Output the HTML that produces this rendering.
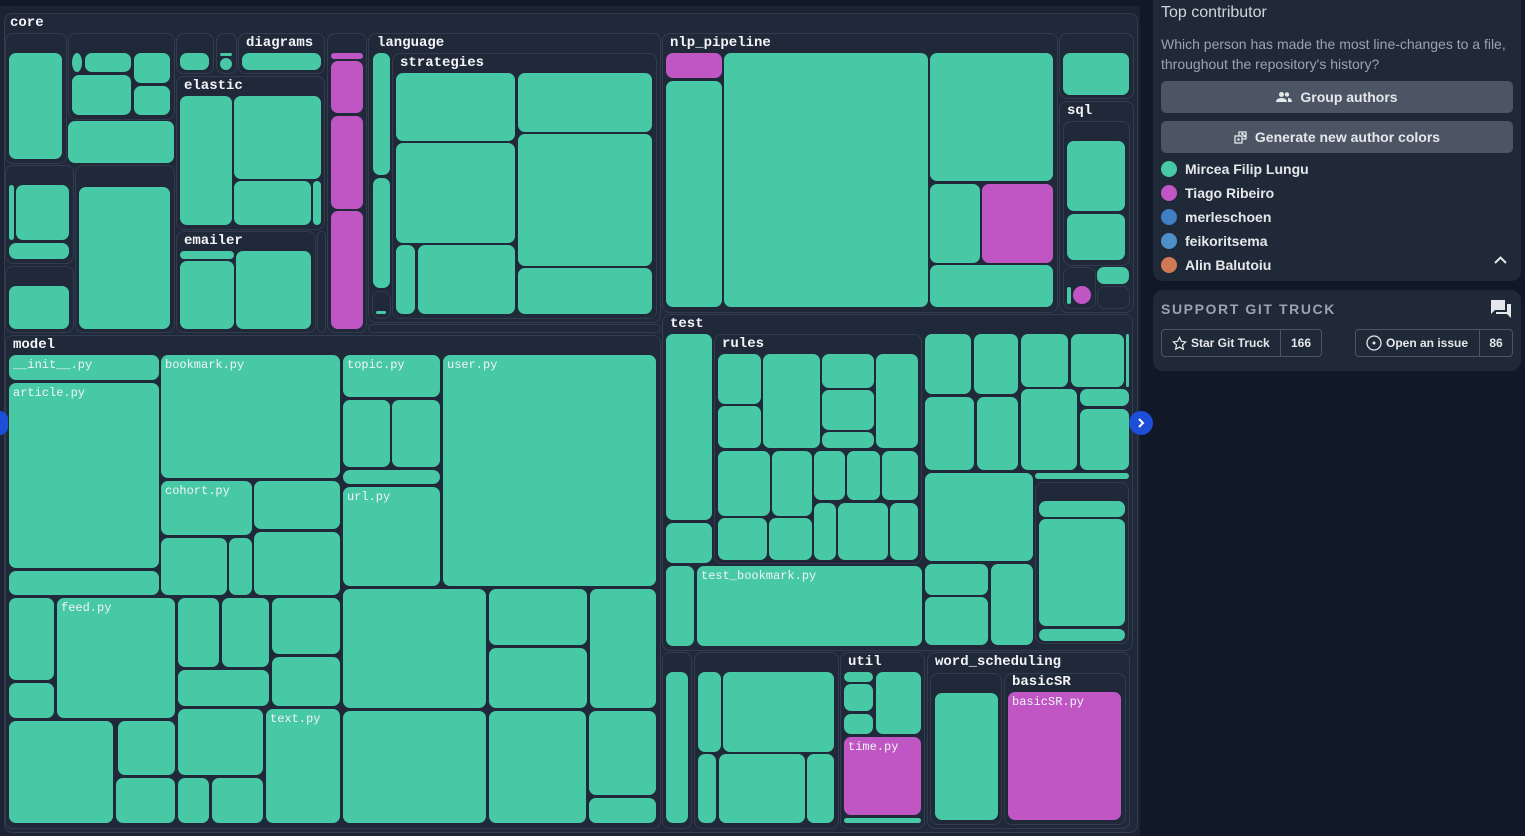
<!DOCTYPE html>
<html><head><meta charset="utf-8"><style>
*{margin:0;padding:0;box-sizing:border-box}
body{width:1525px;height:836px;background:#111827;position:relative;overflow:hidden;font-family:"Liberation Sans",sans-serif}
.a{position:absolute}
.f{position:absolute;border:1px solid #323c4e;border-radius:8px;background:#202939}
.t,.m{position:absolute;border-radius:7px;background:#48c9a5}
.m{background:#c056c4}
.l{position:absolute;font-family:"Liberation Mono",monospace;font-weight:bold;font-size:14px;color:#f3f4f6;line-height:14px}
.n{position:absolute;font-family:"Liberation Mono",monospace;font-size:12px;color:#f3f4f6;line-height:12px;left:4px;top:4px;white-space:nowrap}
.p{position:absolute;background:#1f2937;border-radius:10px}
.btn{position:absolute;background:#4b5563;border-radius:5px;color:#e5e7eb;font-weight:bold;font-size:14px;display:flex;align-items:center;justify-content:center;gap:8px}
.lg{position:absolute;left:1161px;font-weight:bold;font-size:14px;color:#e5e7eb;display:flex;align-items:center;gap:8px;height:18px}
.lg span{width:16px;height:16px;border-radius:50%;display:inline-block}
.sb{position:absolute;border:1px solid #4b5563;border-radius:4px;background:#1f2937;color:#e5e7eb;font-size:12px;font-weight:bold;display:flex;align-items:center;height:28px}
</style></head><body>
<div class="a" style="left:0;top:6px;width:1140px;height:830px;background:#1c2433"></div>
<div class="f" style="left:4px;top:13px;width:1134px;height:820px"></div>
<div class="l" style="left:10px;top:16px">core</div>

<div class="f" style="left:5px;top:33px;width:62px;height:131px"></div>
<div class="t" style="left:9px;top:53px;width:53px;height:106px"></div>
<div class="f" style="left:68px;top:33px;width:107px;height:87px"></div>
<div class="t" style="left:72px;top:53px;width:10px;height:19px;border-radius:50%"></div>
<div class="t" style="left:85px;top:53px;width:46px;height:19px"></div>
<div class="t" style="left:134px;top:53px;width:36px;height:30px"></div>
<div class="t" style="left:72px;top:75px;width:59px;height:40px"></div>
<div class="t" style="left:134px;top:86px;width:36px;height:29px"></div>
<div class="t" style="left:68px;top:121px;width:106px;height:42px"></div>
<div class="f" style="left:5px;top:165px;width:69px;height:99px"></div>
<div class="t" style="left:9px;top:185px;width:5px;height:55px;border-radius:3px"></div>
<div class="t" style="left:16px;top:185px;width:53px;height:55px"></div>
<div class="t" style="left:9px;top:243px;width:60px;height:16px"></div>
<div class="f" style="left:75px;top:165px;width:100px;height:168px"></div>
<div class="t" style="left:79px;top:187px;width:91px;height:142px"></div>
<div class="f" style="left:5px;top:266px;width:69px;height:67px"></div>
<div class="t" style="left:9px;top:286px;width:60px;height:43px"></div>
<div class="f" style="left:176px;top:33px;width:38px;height:41px"></div>
<div class="t" style="left:180px;top:53px;width:29px;height:17px"></div>
<div class="f" style="left:216px;top:33px;width:21px;height:41px"></div>
<div class="t" style="left:220px;top:53px;width:12px;height:3px"></div>
<div class="t" style="left:220px;top:58px;width:12px;height:12px;border-radius:50%"></div>
<div class="f" style="left:238px;top:33px;width:87px;height:41px"></div>
<div class="l" style="left:246px;top:36px">diagrams</div>
<div class="t" style="left:242px;top:53px;width:79px;height:17px"></div>
<div class="f" style="left:176px;top:76px;width:149px;height:154px"></div>
<div class="l" style="left:184px;top:79px">elastic</div>
<div class="t" style="left:180px;top:96px;width:52px;height:129px"></div>
<div class="t" style="left:234px;top:96px;width:87px;height:83px"></div>
<div class="t" style="left:234px;top:181px;width:77px;height:44px"></div>
<div class="t" style="left:313px;top:181px;width:8px;height:44px;border-radius:4px"></div>
<div class="f" style="left:176px;top:231px;width:140px;height:102px"></div>
<div class="l" style="left:184px;top:234px">emailer</div>
<div class="t" style="left:180px;top:251px;width:54px;height:8px;border-radius:4px"></div>
<div class="t" style="left:180px;top:261px;width:54px;height:68px"></div>
<div class="t" style="left:236px;top:251px;width:75px;height:78px"></div>
<div class="f" style="left:317px;top:231px;width:9px;height:102px"></div>
<div class="f" style="left:327px;top:33px;width:40px;height:300px"></div>
<div class="m" style="left:331px;top:53px;width:32px;height:6px;border-radius:3px"></div>
<div class="m" style="left:331px;top:61px;width:32px;height:52px"></div>
<div class="m" style="left:331px;top:116px;width:32px;height:93px"></div>
<div class="m" style="left:331px;top:211px;width:32px;height:118px"></div>

<div class="f" style="left:368px;top:33px;width:293px;height:290px"></div>
<div class="l" style="left:377px;top:36px">language</div>
<div class="t" style="left:373px;top:53px;width:17px;height:122px"></div>
<div class="t" style="left:373px;top:178px;width:17px;height:110px"></div>
<div class="f" style="left:372px;top:291px;width:19px;height:28px"></div>
<div class="t" style="left:376px;top:311px;width:10px;height:3px"></div>
<div class="f" style="left:392px;top:53px;width:265px;height:266px"></div>
<div class="l" style="left:400px;top:56px">strategies</div>
<div class="t" style="left:396px;top:73px;width:119px;height:68px"></div>
<div class="t" style="left:518px;top:73px;width:134px;height:59px"></div>
<div class="t" style="left:396px;top:143px;width:119px;height:100px"></div>
<div class="t" style="left:518px;top:134px;width:134px;height:132px"></div>
<div class="t" style="left:396px;top:245px;width:19px;height:69px"></div>
<div class="t" style="left:418px;top:245px;width:97px;height:69px"></div>
<div class="t" style="left:518px;top:268px;width:134px;height:46px"></div>
<div class="f" style="left:368px;top:324px;width:293px;height:9px"></div>

<div class="f" style="left:662px;top:33px;width:396px;height:280px"></div>
<div class="l" style="left:670px;top:36px">nlp_pipeline</div>
<div class="m" style="left:666px;top:53px;width:56px;height:25px"></div>
<div class="t" style="left:666px;top:81px;width:56px;height:226px"></div>
<div class="t" style="left:724px;top:53px;width:204px;height:254px"></div>
<div class="t" style="left:930px;top:53px;width:123px;height:128px"></div>
<div class="t" style="left:930px;top:184px;width:50px;height:79px"></div>
<div class="m" style="left:982px;top:184px;width:71px;height:79px"></div>
<div class="t" style="left:930px;top:265px;width:123px;height:42px"></div>
<div class="f" style="left:1059px;top:33px;width:75px;height:66px"></div>
<div class="t" style="left:1063px;top:53px;width:66px;height:42px"></div>
<div class="f" style="left:1059px;top:101px;width:75px;height:212px"></div>
<div class="l" style="left:1067px;top:104px">sql</div>
<div class="f" style="left:1063px;top:121px;width:67px;height:145px"></div>
<div class="t" style="left:1067px;top:141px;width:58px;height:70px"></div>
<div class="t" style="left:1067px;top:214px;width:58px;height:46px"></div>
<div class="f" style="left:1063px;top:267px;width:33px;height:42px"></div>
<div class="t" style="left:1067px;top:287px;width:4px;height:17px;border-radius:2px"></div>
<div class="m" style="left:1073px;top:286px;width:18px;height:18px;border-radius:50%"></div>
<div class="t" style="left:1097px;top:267px;width:32px;height:17px"></div>
<div class="f" style="left:1097px;top:286px;width:33px;height:23px"></div>

<div class="f" style="left:5px;top:335px;width:656px;height:494px"></div>
<div class="l" style="left:13px;top:338px">model</div>
<div class="t" style="left:9px;top:355px;width:150px;height:25px"><span class="n">__init__.py</span></div>
<div class="t" style="left:9px;top:383px;width:150px;height:185px"><span class="n">article.py</span></div>
<div class="t" style="left:9px;top:571px;width:150px;height:24px"></div>
<div class="t" style="left:161px;top:355px;width:179px;height:123px"><span class="n">bookmark.py</span></div>
<div class="t" style="left:161px;top:481px;width:91px;height:54px"><span class="n">cohort.py</span></div>
<div class="t" style="left:254px;top:481px;width:86px;height:48px"></div>
<div class="t" style="left:161px;top:538px;width:66px;height:57px"></div>
<div class="t" style="left:229px;top:538px;width:23px;height:57px"></div>
<div class="t" style="left:254px;top:532px;width:86px;height:63px"></div>
<div class="t" style="left:343px;top:355px;width:97px;height:42px"><span class="n">topic.py</span></div>
<div class="t" style="left:343px;top:400px;width:47px;height:67px"></div>
<div class="t" style="left:392px;top:400px;width:48px;height:67px"></div>
<div class="t" style="left:343px;top:470px;width:97px;height:14px"></div>
<div class="t" style="left:343px;top:487px;width:97px;height:99px"><span class="n">url.py</span></div>
<div class="t" style="left:443px;top:355px;width:213px;height:231px"><span class="n">user.py</span></div>
<div class="t" style="left:9px;top:598px;width:45px;height:82px"></div>
<div class="t" style="left:9px;top:683px;width:45px;height:35px"></div>
<div class="t" style="left:57px;top:598px;width:118px;height:120px"><span class="n">feed.py</span></div>
<div class="t" style="left:178px;top:598px;width:41px;height:69px"></div>
<div class="t" style="left:222px;top:598px;width:47px;height:69px"></div>
<div class="t" style="left:272px;top:598px;width:68px;height:56px"></div>
<div class="t" style="left:178px;top:670px;width:91px;height:36px"></div>
<div class="t" style="left:272px;top:657px;width:68px;height:49px"></div>
<div class="t" style="left:9px;top:721px;width:104px;height:102px"></div>
<div class="t" style="left:118px;top:721px;width:57px;height:54px"></div>
<div class="t" style="left:116px;top:778px;width:59px;height:45px"></div>
<div class="t" style="left:178px;top:709px;width:85px;height:66px"></div>
<div class="t" style="left:178px;top:778px;width:31px;height:45px"></div>
<div class="t" style="left:212px;top:778px;width:51px;height:45px"></div>
<div class="t" style="left:266px;top:709px;width:74px;height:114px"><span class="n">text.py</span></div>
<div class="t" style="left:343px;top:589px;width:143px;height:119px"></div>
<div class="t" style="left:489px;top:589px;width:98px;height:56px"></div>
<div class="t" style="left:489px;top:648px;width:98px;height:60px"></div>
<div class="t" style="left:590px;top:589px;width:66px;height:119px"></div>
<div class="t" style="left:343px;top:711px;width:143px;height:112px"></div>
<div class="t" style="left:489px;top:711px;width:97px;height:112px"></div>
<div class="t" style="left:589px;top:711px;width:67px;height:84px"></div>
<div class="t" style="left:589px;top:798px;width:67px;height:25px"></div>

<div class="f" style="left:662px;top:314px;width:471px;height:337px"></div>
<div class="l" style="left:670px;top:317px">test</div>
<div class="t" style="left:666px;top:334px;width:46px;height:186px"></div>
<div class="t" style="left:666px;top:523px;width:46px;height:40px"></div>
<div class="t" style="left:666px;top:566px;width:28px;height:80px"></div>
<div class="t" style="left:697px;top:566px;width:225px;height:80px"><span class="n">test_bookmark.py</span></div>
<div class="f" style="left:714px;top:334px;width:208px;height:230px"></div>
<div class="l" style="left:722px;top:337px">rules</div>
<div class="t" style="left:718px;top:354px;width:43px;height:50px"></div>
<div class="t" style="left:763px;top:354px;width:57px;height:94px"></div>
<div class="t" style="left:822px;top:354px;width:52px;height:34px"></div>
<div class="t" style="left:822px;top:390px;width:52px;height:40px"></div>
<div class="t" style="left:822px;top:432px;width:52px;height:16px"></div>
<div class="t" style="left:876px;top:354px;width:42px;height:94px"></div>
<div class="t" style="left:718px;top:406px;width:43px;height:42px"></div>
<div class="t" style="left:718px;top:451px;width:52px;height:65px"></div>
<div class="t" style="left:772px;top:451px;width:40px;height:65px"></div>
<div class="t" style="left:814px;top:451px;width:31px;height:49px"></div>
<div class="t" style="left:847px;top:451px;width:33px;height:49px"></div>
<div class="t" style="left:882px;top:451px;width:36px;height:49px"></div>
<div class="t" style="left:718px;top:518px;width:49px;height:42px"></div>
<div class="t" style="left:769px;top:518px;width:43px;height:42px"></div>
<div class="t" style="left:814px;top:503px;width:22px;height:57px"></div>
<div class="t" style="left:838px;top:503px;width:50px;height:57px"></div>
<div class="t" style="left:890px;top:503px;width:28px;height:57px"></div>
<div class="t" style="left:925px;top:334px;width:46px;height:60px"></div>
<div class="t" style="left:974px;top:334px;width:44px;height:60px"></div>
<div class="t" style="left:1021px;top:334px;width:47px;height:53px"></div>
<div class="t" style="left:1071px;top:334px;width:53px;height:53px"></div>
<div class="t" style="left:1126px;top:334px;width:3px;height:53px;border-radius:2px"></div>
<div class="t" style="left:925px;top:397px;width:49px;height:73px"></div>
<div class="t" style="left:977px;top:397px;width:41px;height:73px"></div>
<div class="t" style="left:1021px;top:389px;width:56px;height:81px"></div>
<div class="t" style="left:1080px;top:389px;width:49px;height:17px"></div>
<div class="t" style="left:1080px;top:409px;width:49px;height:61px"></div>
<div class="t" style="left:925px;top:473px;width:108px;height:88px"></div>
<div class="t" style="left:1035px;top:473px;width:94px;height:6px;border-radius:3px"></div>
<div class="f" style="left:1035px;top:482px;width:94px;height:162px"></div>
<div class="t" style="left:1039px;top:501px;width:86px;height:16px"></div>
<div class="t" style="left:1039px;top:519px;width:86px;height:107px"></div>
<div class="t" style="left:1039px;top:629px;width:86px;height:12px;border-radius:6px"></div>
<div class="t" style="left:925px;top:564px;width:63px;height:31px"></div>
<div class="t" style="left:925px;top:597px;width:63px;height:48px"></div>
<div class="t" style="left:991px;top:564px;width:42px;height:81px"></div>

<div class="f" style="left:662px;top:652px;width:30px;height:177px"></div>
<div class="t" style="left:666px;top:672px;width:22px;height:151px"></div>
<div class="f" style="left:694px;top:652px;width:145px;height:177px"></div>
<div class="t" style="left:698px;top:672px;width:23px;height:80px"></div>
<div class="t" style="left:723px;top:672px;width:111px;height:80px"></div>
<div class="t" style="left:698px;top:754px;width:18px;height:69px"></div>
<div class="t" style="left:719px;top:754px;width:86px;height:69px"></div>
<div class="t" style="left:807px;top:754px;width:27px;height:69px"></div>
<div class="f" style="left:840px;top:652px;width:85px;height:177px"></div>
<div class="l" style="left:848px;top:655px">util</div>
<div class="t" style="left:844px;top:672px;width:29px;height:10px;border-radius:5px"></div>
<div class="t" style="left:844px;top:684px;width:29px;height:27px"></div>
<div class="t" style="left:844px;top:714px;width:29px;height:20px"></div>
<div class="t" style="left:876px;top:672px;width:45px;height:62px"></div>
<div class="m" style="left:844px;top:737px;width:77px;height:78px"><span class="n">time.py</span></div>
<div class="t" style="left:844px;top:818px;width:77px;height:5px;border-radius:3px"></div>
<div class="f" style="left:927px;top:652px;width:203px;height:177px"></div>
<div class="l" style="left:935px;top:655px">word_scheduling</div>
<div class="f" style="left:930px;top:673px;width:72px;height:152px"></div>
<div class="t" style="left:935px;top:693px;width:63px;height:127px"></div>
<div class="f" style="left:1004px;top:673px;width:122px;height:152px"></div>
<div class="l" style="left:1012px;top:675px">basicSR</div>
<div class="m" style="left:1008px;top:692px;width:113px;height:128px"><span class="n">basicSR.py</span></div>

<div class="a" style="left:-8px;top:411px;width:16px;height:24px;border-radius:12px;background:#1d4ed8"></div>
<div class="a" style="left:1129px;top:411px;width:24px;height:24px;border-radius:50%;background:#1d4ed8;display:flex;align-items:center;justify-content:center"><svg width="12" height="12" viewBox="0 0 12 12"><path d="M4 2l4 4-4 4" stroke="#fff" stroke-width="2" fill="none"/></svg></div>

<div class="p" style="left:1153px;top:-10px;width:368px;height:291px"></div>
<div class="a" style="left:1161px;top:4px;font-size:16px;color:#d1d5db">Top contributor</div>
<div class="a" style="left:1161px;top:34px;font-size:14px;line-height:20px;color:#9ca3af;width:360px">Which person has made the most line-changes to a file, throughout the repository's history?</div>
<div class="btn" style="left:1161px;top:81px;width:352px;height:32px"><svg width="16" height="12" viewBox="0 0 16 12"><circle cx="5.5" cy="3.5" r="2.5" fill="#e5e7eb"/><circle cx="11" cy="3.5" r="2.2" fill="#e5e7eb"/><path d="M0 11c0-3 3-4 5.5-4s5.5 1 5.5 4zM12 7c2 0 4 1 4 4h-4z" fill="#e5e7eb"/></svg>Group authors</div>
<div class="btn" style="left:1161px;top:121px;width:352px;height:32px"><svg width="13" height="13" viewBox="0 0 13 13" fill="none" stroke="#e5e7eb" stroke-width="1.3"><rect x="1" y="5" width="7" height="7"/><path d="M5 5V1h7v7H8"/><circle cx="4.5" cy="8.5" r=".6" fill="#e5e7eb"/><circle cx="8.5" cy="3" r=".6" fill="#e5e7eb"/><circle cx="10.5" cy="5" r=".6" fill="#e5e7eb"/></svg>Generate new author colors</div>
<div class="lg" style="top:160px"><span style="background:#48c9a5"></span>Mircea Filip Lungu</div>
<div class="lg" style="top:184px"><span style="background:#c056c4"></span>Tiago Ribeiro</div>
<div class="lg" style="top:208px"><span style="background:#3f7fc4"></span>merleschoen</div>
<div class="lg" style="top:232px"><span style="background:#4d90c8"></span>feikoritsema</div>
<div class="lg" style="top:256px"><span style="background:#d07a55"></span>Alin Balutoiu</div>
<svg class="a" style="left:1494px;top:256px" width="13" height="9" viewBox="0 0 13 9"><path d="M1 7l5.5-5.5L12 7" stroke="#e5e7eb" stroke-width="2" fill="none"/></svg>

<div class="p" style="left:1153px;top:290px;width:368px;height:81px"></div>
<div class="a" style="left:1161px;top:301px;font-size:14px;font-weight:bold;letter-spacing:1.6px;color:#9ca3af">SUPPORT GIT TRUCK</div>
<svg class="a" style="left:1490px;top:299px" width="22" height="20" viewBox="0 0 22 20"><path d="M1 1h14v10H5l-4 4z" fill="#e5e7eb"/><path d="M17 5h4v14l-4-4H6v-2h11z" fill="#e5e7eb"/></svg>
<div class="sb" style="left:1161px;top:329px;width:161px"><div style="display:flex;align-items:center;gap:4px;padding:0 10px;width:119px;height:100%;border-right:1px solid #4b5563"><svg width="15" height="15" viewBox="0 0 16 16"><path d="M8 1.5l2 4.2 4.6.6-3.4 3.2.9 4.6L8 11.8 3.9 14.1l.9-4.6L1.4 6.3 6 5.7z" fill="none" stroke="#e5e7eb" stroke-width="1.3"/></svg>Star Git Truck</div><div style="flex:1;text-align:center">166</div></div>
<div class="sb" style="left:1355px;top:329px;width:158px"><div style="display:flex;align-items:center;gap:4px;padding:0 10px;width:124px;height:100%;border-right:1px solid #4b5563"><svg width="16" height="16" viewBox="0 0 16 16"><circle cx="8" cy="8" r="7" fill="none" stroke="#e5e7eb" stroke-width="1.3"/><circle cx="8" cy="8" r="1.5" fill="#e5e7eb"/></svg>Open an issue</div><div style="flex:1;text-align:center">86</div></div>
</body></html>
